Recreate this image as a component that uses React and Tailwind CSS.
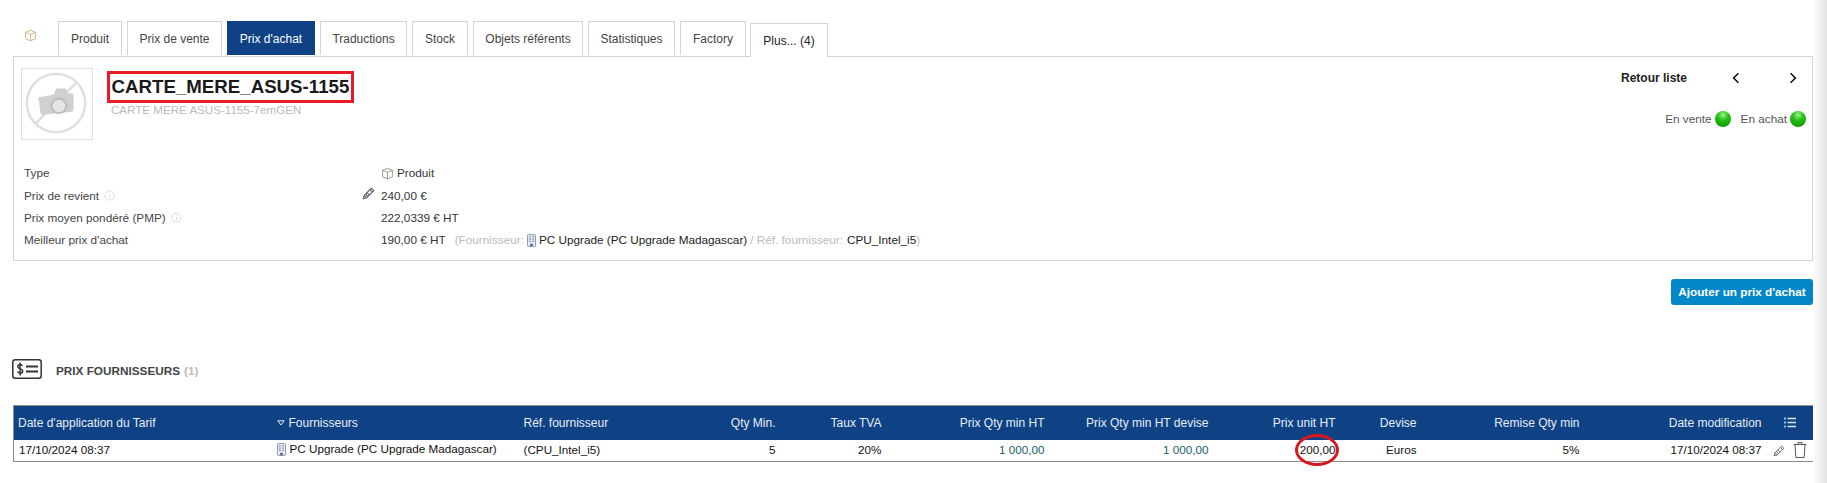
const TABS = [
  { label: 'Produit', w: 'w-[64px]' },
  { label: 'Prix de vente', w: 'w-[95px]' },
  { label: "Prix d'achat", w: 'w-[88px]', active: true },
  { label: 'Traductions', w: 'w-[87px]' },
  { label: 'Stock', w: 'w-[56px]' },
  { label: 'Objets référents', w: 'w-[110px]' },
  { label: 'Statistiques', w: 'w-[87px]' },
  { label: 'Factory', w: 'w-[66px]' },
]

function CubeIcon({ className, color = '#888' }) {
  return (
    <svg viewBox="0 0 16 16" className={className} fill="none" stroke={color} strokeWidth="1" strokeLinejoin="round">
      <path d="M8 1.500 14 4v8l-6 2.500L2 12V4z" />
      <path d="M2 4l6 2.700L14 4M8 6.700v7.800" />
    </svg>
  )
}

function Pencil({ className, color = '#555' }) {
  return (
    <svg viewBox="0 0 16 16" className={className} fill="none" stroke={color} strokeWidth="1.300" strokeLinejoin="round">
      <path d="M1.500 14.500 2.700 10.400 11.600 1.500l2.900 2.900-8.900 8.900z" />
      <path d="M2.700 10.400l2.900 2.900M4.400 8.700l2.900 2.900M6.300 6.800l2.900 2.900M9.900 3.200l2.900 2.900" />
    </svg>
  )
}

function Building() {
  return (
    <svg viewBox="0 0 10 14" className="w-[9px] h-[13px] shrink-0" fill="none">
      <rect x="0.500" y="0.500" width="9" height="13" rx="1" stroke="#7a86a8" fill="#eef0f6" />
      <path d="M2.500 3h1.500M6 3h1.500M2.500 5.500h1.500M6 5.500h1.500M2.500 8h1.500M6 8h1.500" stroke="#5a6a9a" strokeWidth="1.200" />
      <rect x="3.500" y="10.500" width="3" height="3" fill="#5a6a9a" />
    </svg>
  )
}

function InfoDot() {
  return (
    <svg viewBox="0 0 12 12" className="w-[11px] h-[11px] inline-block" fill="none" stroke="#d8d8d8">
      <circle cx="6" cy="6" r="5" />
      <path d="M6 5.200v3.300M6 3.200v1" />
    </svg>
  )
}

function NoPhoto() {
  return (
    <svg viewBox="0 0 72 72" className="w-[72px] h-[72px] shrink-0 border border-[#e0e0e0]" fill="none">
      <circle cx="35" cy="35" r="30" stroke="#dedede" strokeWidth="2.500" />
      <path d="M14 56 56 14" stroke="#dedede" strokeWidth="2.500" />
      <path d="M17 29l12-2 4-1 2-6h10l2 5h4a2 2 0 0 1 2 2v15a2 2 0 0 1-2 2l-30 3a2 2 0 0 1-2-2l-2-14z" fill="#d0d0d0" />
      <circle cx="38" cy="38" r="7.500" fill="#e4e4e4" stroke="#bdbdbd" strokeWidth="2" />
    </svg>
  )
}

function Dot() {
  return <span className="inline-block w-4 h-4 rounded-full bg-[radial-gradient(circle_at_50%_25%,#9ff08f_0%,#23c113_38%,#0a8c00_100%)]" />
}

function Row({ label, info, pencil, children }) {
  return (
    <div className="flex items-center h-[22.300px]">
      <div className="w-[337px] flex items-center gap-[5px]">
        <span className="text-[#444]">{label}</span>
        {info && <InfoDot />}
      </div>
      <div className="w-[20px] flex">
        {pencil && <Pencil className="w-[13px] h-[13px] -mt-[3px] ml-[1px]" />}
      </div>
      <div className="flex items-center text-[#333]">{children}</div>
    </div>
  )
}

const Th = ({ className = '', children }) => (
  <th className={`px-[4px] text-[12px] font-normal text-[#e8edf5] ${className}`}>{children}</th>
)

const Td = ({ className = '', children }) => (
  <td className={`px-[4px] ${className}`}>{children}</td>
)

export default function App() {
  return (
    <div className="relative h-[483px] overflow-hidden bg-white text-[11.750px] font-['Liberation_Sans',Arial,sans-serif]">
      <div className="pl-[13px] pr-[14px] pt-[21px]">
        {/* onglets */}
        <div className="flex items-start h-[35px]">
          <div className="w-[45px] pl-[11px] pt-[8px]">
            <CubeIcon className="w-[13px] h-[13px]" color="#c4a868" />
          </div>
          <div className="flex gap-[5px]">
            {TABS.map((t) => (
              <div
                key={t.label}
                className={`${t.w} h-[34px] flex items-center justify-center border border-b-0 text-[12px] ${
                  t.active ? 'bg-[#0e4285] border-[#0e4285] text-white' : 'border-[#d5d5d5] text-[#444]'
                }`}
              >
                {t.label}
              </div>
            ))}
            <div className="w-[78px] h-[34px] mt-[2px] -ml-[1px] flex items-center justify-center border border-b-0 border-[#d5d5d5] bg-white text-[#222] text-[12px]">
              Plus... (4)
            </div>
          </div>
        </div>

        {/* fiche produit */}
        <div className="h-[205px] border border-[#d5d5d5] pl-[7px] pr-[6px] pt-[11px]">
          <div className="flex h-[94px]">
            <NoPhoto />
            <div className="ml-[14px] flex-1">
              <div className="w-fit h-[32px] mt-[3px] px-[1.500px] flex items-center border-[3px] border-[#e81c24] text-[18.700px] leading-none font-bold text-[#1a1a1a]">
                CARTE_MERE_ASUS-1155
              </div>
              <div className="pl-[4px] text-[11.600px] text-[#bbb] leading-[14px]">CARTE MERE ASUS-1155-7emGEN</div>
            </div>
            <div className="w-[191px] shrink-0 flex flex-col">
              <div className="flex items-center h-[20px]">
                <span className="ml-[6px] w-[111px] text-[12px] font-bold text-[#222]">Retour liste</span>
                <svg viewBox="0 0 10 14" className="w-[8px] h-[12px]" fill="none" stroke="#000" strokeWidth="1.800">
                  <path d="M8 1 2 7l6 6" />
                </svg>
                <svg viewBox="0 0 10 14" className="ml-[49px] w-[8px] h-[12px]" fill="none" stroke="#000" strokeWidth="1.800">
                  <path d="M2 1l6 6-6 6" />
                </svg>
              </div>
              <div className="mt-[22px] flex items-center justify-end text-[#555]">
                <span>En vente</span>
                <span className="ml-[3px] flex"><Dot /></span>
                <span className="ml-[10px]">En achat</span>
                <span className="ml-[3px] flex"><Dot /></span>
              </div>
            </div>
          </div>
          <div className="pl-[3px]">
            <Row label="Type">
              <CubeIcon className="w-[13px] h-[13px] mr-[3px]" />
              Produit
            </Row>
            <Row label="Prix de revient" info pencil>240,00 €</Row>
            <Row label="Prix moyen pondéré (PMP)" info>222,0339 € HT</Row>
            <Row label="Meilleur prix d'achat">
              <span>190,00 € HT</span>
              <span className="ml-[9px] text-[#bbb]">(Fournisseur:</span>
              <span className="ml-[3px] mr-[3px] flex"><Building /></span>
              <span className="text-[#222]">PC Upgrade (PC Upgrade Madagascar)</span>
              <span className="ml-[3px] text-[#bbb]">/ Réf. fournisseur:</span>
              <span className="ml-[4px] text-[#222]">CPU_Intel_i5</span>
              <span className="text-[#bbb]">)</span>
            </Row>
          </div>
        </div>

        <div className="flex justify-end mt-[18px]">
          <button className="w-[142px] h-[26px] rounded-[3px] bg-[#0288c9] text-white font-bold">
            Ajouter un prix d'achat
          </button>
        </div>

        {/* prix fournisseurs */}
        <div className="flex items-center mt-[54px] h-[20px] -ml-[1px]">
          <svg viewBox="0 0 30 20" className="w-[30px] h-[20px]" fill="none" stroke="#333" strokeWidth="1.500">
            <rect x="0.800" y="0.800" width="28.400" height="18.400" rx="2.500" />
            <path d="M14 7.500h12M14 12.500h12" strokeWidth="2" />
            <path d="M10.500 7c-.5-1-1.300-1.500-2.400-1.500-1.400 0-2.400.8-2.400 2 0 2.700 5 1.500 5 4.500 0 1.300-1.100 2.100-2.600 2.100-1.200 0-2.200-.5-2.700-1.600M8.100 3.500v13" />
          </svg>
          <span className="ml-[14px] mt-[3px] font-bold text-[#444]">PRIX FOURNISSEURS</span>
          <span className="ml-[4px] mt-[3px] font-bold text-[#bbb]">(1)</span>
        </div>

        <table className="mt-[26px] w-[1800px] table-fixed border-collapse border border-[#8c8c8c]">
          <colgroup>
            <col className="w-[260px]" />
            <col className="w-[246px]" />
            <col className="w-[141px]" />
            <col className="w-[119px]" />
            <col className="w-[106px]" />
            <col className="w-[163px]" />
            <col className="w-[164px]" />
            <col className="w-[127px]" />
            <col className="w-[81px]" />
            <col className="w-[163px]" />
            <col className="w-[182px]" />
            <col className="w-[48px]" />
          </colgroup>
          <thead>
            <tr className="h-[34px] bg-[#0e4285]">
              <Th className="text-left">Date d'application du Tarif</Th>
              <Th className="text-left">
                <span className="inline-flex items-center">
                  <svg viewBox="0 0 8 6" className="w-[8px] h-[6px] mr-[4px] -ml-[1px]" fill="none" stroke="#e8edf5">
                    <path d="M.800.800h6.400L4 5z" />
                  </svg>
                  Fournisseurs
                </span>
              </Th>
              <Th className="text-left">Réf. fournisseur</Th>
              <Th className="text-right">Qty Min.</Th>
              <Th className="text-right">Taux TVA</Th>
              <Th className="text-right">Prix Qty min HT</Th>
              <Th className="text-right">Prix Qty min HT devise</Th>
              <Th className="text-right">Prix unit HT</Th>
              <Th className="text-right">Devise</Th>
              <Th className="text-right">Remise Qty min</Th>
              <Th className="text-right">Date modification</Th>
              <Th>
                <svg viewBox="0 0 12 11" className="ml-[14px] w-[12px] h-[11px]" stroke="#dfe6f0" strokeWidth="1.500">
                  <path d="M3.500 1.500H12M3.500 5.500H12M3.500 9.500H12" />
                  <path d="M0 1.500h2M0 5.500h2M0 9.500h2" stroke="#8fc0ee" strokeWidth="2" />
                </svg>
              </Th>
            </tr>
          </thead>
          <tbody>
            <tr className="h-[22px] text-[#111] text-[11.700px]">
              <Td className="pl-[5px]">17/10/2024 08:37</Td>
              <Td>
                <span className="inline-flex items-center gap-[4px] -ml-[1px]"><Building />PC Upgrade (PC Upgrade Madagascar)</span>
              </Td>
              <Td>(CPU_Intel_i5)</Td>
              <Td className="text-right">5</Td>
              <Td className="text-right">20%</Td>
              <Td className="text-right text-[#17616b]">1 000,00</Td>
              <Td className="text-right text-[#17616b]">1 000,00</Td>
              <Td className="text-right">
                <span className="relative">
                  200,00
                  <span className="absolute left-[-5px] top-[-9px] w-[44px] h-[32px] rounded-[50%] border-[3px] border-[#d9151c]" />
                </span>
              </Td>
              <Td className="text-right">Euros</Td>
              <Td className="text-right">5%</Td>
              <Td className="text-right">17/10/2024 08:37</Td>
              <Td>
                <div className="flex items-center gap-[8px] pl-[3px] h-[20px]">
                  <Pencil className="w-[12px] h-[12px] mt-[1px]" color="#666" />
                  <svg viewBox="0 0 14 16" className="w-[14px] h-[16px] -mt-[1px]" fill="none" stroke="#555">
                    <path d="M.500 2.500h13M5 2.500V.500h4v2M2 2.500l.8 13h8.400l.8-13" />
                  </svg>
                </div>
              </Td>
            </tr>
          </tbody>
        </table>
      </div>

      {/* ombre à droite */}
      <div className="absolute right-0 top-0 bottom-0 w-[14px] bg-gradient-to-r from-white to-[#e2e2e2]" />
    </div>
  )
}
